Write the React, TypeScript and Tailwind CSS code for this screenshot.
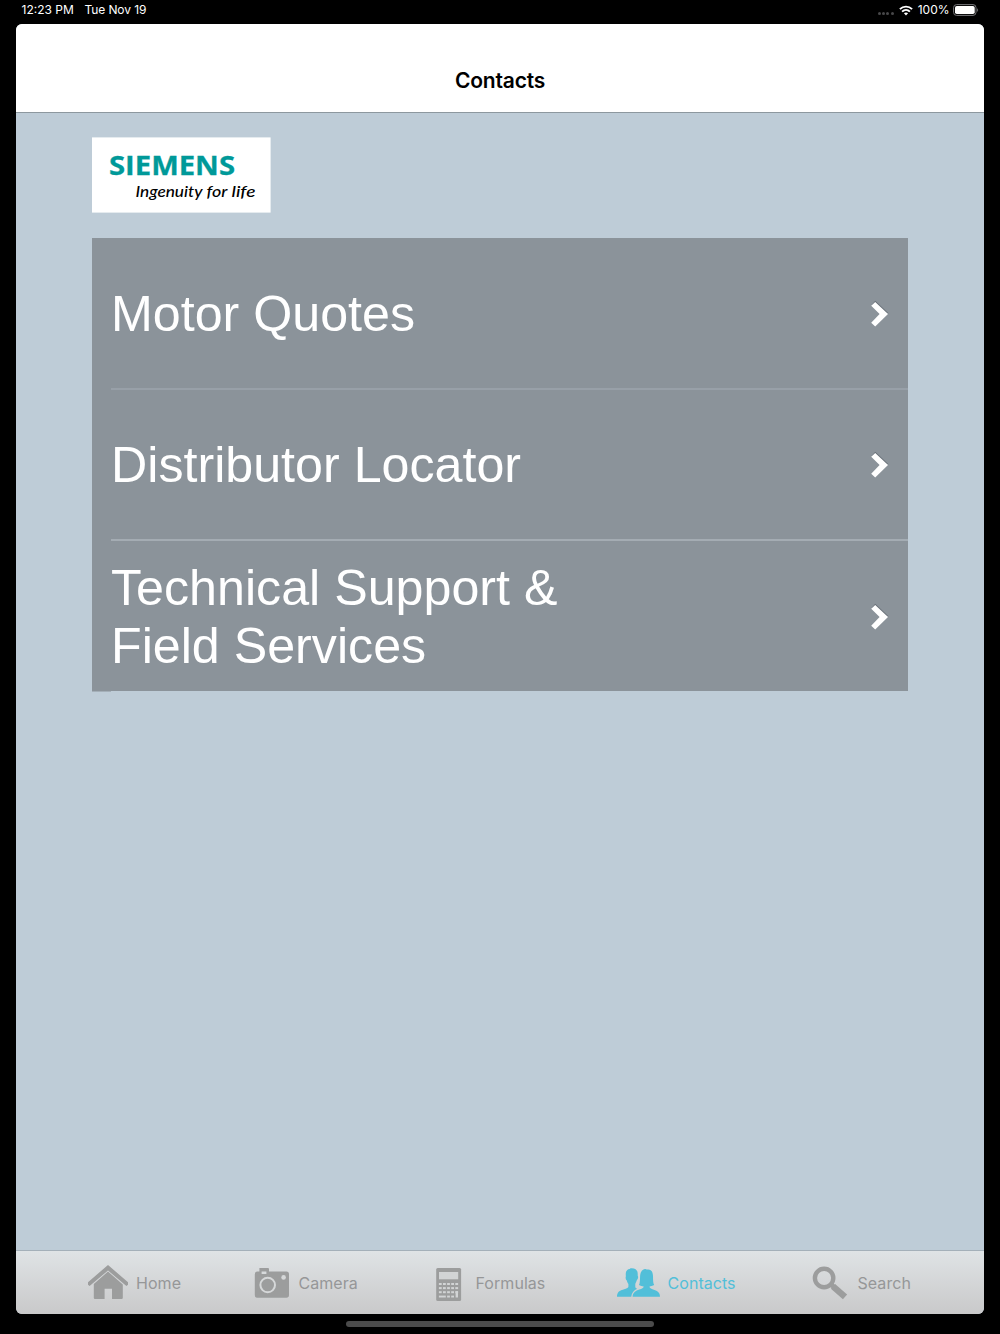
import type { ReactNode } from "react";

const contactRows = [
  { id: "quotes", lines: ["Motor Quotes"], rowClass: "h-[152px]", dividerClass: "border-b-2 border-[#98a0a8] pt-[2px]" },
  { id: "distributor", lines: ["Distributor Locator"], rowClass: "h-[151px]", dividerClass: "border-b-2 border-[#a4acb3] pt-px" },
  { id: "support", lines: ["Technical Support &", "Field Services"], rowClass: "h-[150px]", dividerClass: "pt-[2px]" },
];

function WifiIcon() {
  return (
    <svg width="14" height="11" viewBox="0 0 14 11" fill="none" stroke="#fff" strokeWidth="1.9">
      <path d="M0.9 4.2C4.3 0.8 9.7 0.8 13.1 4.2" />
      <path d="M3.1 6.6C5.3 4.5 8.7 4.5 10.9 6.6" />
      <path d="M4.9 8.3C6 7.3 8 7.3 9.1 8.3L7 10.5Z" fill="#fff" stroke="none" />
    </svg>
  );
}

function BatteryIcon() {
  return (
    <svg width="26" height="12" viewBox="0 0 26 12">
      <rect x="0.6" y="0.6" width="22.4" height="10.8" rx="3" fill="none" stroke="#77777a" strokeWidth="1" />
      <rect x="2" y="2" width="19.7" height="8" rx="1.8" fill="#fff" />
      <path d="M24.2 4.2C25.4 4.6 25.4 7.4 24.2 7.8Z" fill="#77777a" />
    </svg>
  );
}

function HomeIcon() {
  return (
    <svg className="-mt-px" width="40" height="34" viewBox="0 0 40 34" fill="#9c9d9d">
      <path d="M20 0L40 17.2V19.8L38.4 20.9L20 5.4L1.6 20.9L0 19.8V17.2Z" />
      <path d="M20 6.6L34.8 19.4V32.8Q34.8 34 33.6 34H24V23.8H16.6V34H7Q5.8 34 5.8 33V18.9Z" />
    </svg>
  );
}

function CameraIcon() {
  return (
    <svg className="mt-px" width="35" height="30" viewBox="0 0 35 30">
      <path
        fill="#9c9d9d"
        fillRule="evenodd"
        d="M5.4 0H14Q15 0 15 1V3.5H32.4Q35 3.5 35 6.2V27Q35 29.7 32.4 29.7H3Q.8 29.7.8 27V6.5Q.8 3.5 3.4 3.5H5.4ZM7.6 3.5V6H12.4V3.5Z"
      />
      <circle cx="13.7" cy="17" r="7.3" fill="none" stroke="#d6d8d9" strokeWidth="2" />
      <circle cx="29.6" cy="9.4" r="2.3" fill="#d6d8d9" />
    </svg>
  );
}

function CalculatorIcon() {
  return (
    <svg className="mt-[3px]" width="26" height="33" viewBox="0 0 26 33">
      <rect x="0.2" width="24.9" height="33" rx="1.5" fill="#9c9d9d" />
      <g fill="#d2d4d5">
        <rect x="3" y="4" width="19.2" height="7.3" />
        {[15, 19.1, 23.2].map((y) =>
          [2.9, 7, 11.1, 15.2, 19.3].map((x) => (
            <rect key={`${x}-${y}`} x={x} y={y} width="2.8" height="2" />
          )),
        )}
        <rect x="2.9" y="27.6" width="6.9" height="1.9" />
        <rect x="11.1" y="27.6" width="2.8" height="1.9" />
        <rect x="15.2" y="27.6" width="2.8" height="1.9" />
        <rect x="19.6" y="23.2" width="2.4" height="6.3" />
      </g>
    </svg>
  );
}

function ContactsIcon() {
  return (
    <svg width="43" height="29" viewBox="0 0 43 29" fill="#52bfd9">
      <path d="M14.7 0.3C19.4 0.3 21 3 20.7 7.2C20.6 8.1 21.4 8.3 21 10C20.6 11.5 20 11.6 19.7 12.6C19.3 14.3 18.5 15 18.3 16.2V19C18.6 20.2 19.5 20.4 20.2 20.8C17 22.4 14.7 24.8 14.2 28.8H0C0 24.8 1.8 23.3 4.8 22.1C8 20.8 11.1 20.3 11.4 18.7V16.1C10.8 14.8 10.1 14.2 9.8 12.5C8.9 12.1 8.2 9.3 8.9 8.2C8.3 4.3 9.4 1.4 12.6 0.9C13.2 0.4 13.9 0.3 14.7 0.3Z" />
      <path d="M28.4 1.1L29.7 1.6C34.4 .7 35.9 4 36 8.2C36.1 12.2 36 15 37.2 17.1C35.7 18.1 33.6 18.3 32.5 18.5C32.5 20.4 34.6 21 37.5 22.1C41.1 23.5 43 25 43 28.8H15.6C15.7 24.6 18.7 22.8 22.3 21.5C24.9 20.6 26.6 20.2 26.7 18.5C25.2 18.3 23.3 18 22 17.1C23.1 14.6 22.9 11.9 23.1 8C23.4 3.7 25 1.6 28.4 1.1Z" />
    </svg>
  );
}

function SearchIcon() {
  return (
    <svg width="36" height="34" viewBox="0 0 36 34" fill="none" stroke="#9c9d9d">
      <circle cx="12.1" cy="12" r="9.2" strokeWidth="4.4" />
      <path d="M18.5 18L22.5 21.5" strokeWidth="4.8" />
      <path d="M21 20.3L33 30.8" strokeWidth="6.4" />
    </svg>
  );
}

function ChevronIcon() {
  return (
    <svg className="shrink-0" width="20" height="28" viewBox="0 0 20 28">
      <path d="M5.2 0.8L18.8 13.6L14 12L1.6 5Z" fill="#687078" />
      <path d="M5.2 2L18 14L5.2 26.6L1.2 22.8L9.6 14L1.2 5.7Z" fill="#fff" />
    </svg>
  );
}

function SiemensLogo() {
  return (
    <svg className="block" width="179" height="76" viewBox="0 0 179 76" role="img" aria-label="Siemens">
      <rect y="0.4" width="178.6" height="75.2" fill="#fff" />
      <text
        x="17"
        y="38.3"
        textLength="126"
        lengthAdjust="spacingAndGlyphs"
        fill="#009999"
        stroke="#009999"
        strokeWidth="0.3"
        className="font-['Open_Sans',sans-serif] text-[26px] font-bold"
      >
        SIEMENS
      </text>
      <g fill="#000" className="font-['Lato',sans-serif] text-[16px] font-medium italic">
        <text x="43.5" y="60" textLength="67" lengthAdjust="spacingAndGlyphs">
          Ingenuity
        </text>
        <text x="114.5" y="60" textLength="21" lengthAdjust="spacingAndGlyphs">
          for
        </text>
        <text x="139.5" y="60" textLength="24" lengthAdjust="spacingAndGlyphs">
          life
        </text>
      </g>
    </svg>
  );
}

function Tab({ icon, label, iconBox, active = false }: { icon: ReactNode; label: string; iconBox: string; active?: boolean }) {
  return (
    <button type="button" className="flex h-full items-center">
      <span className={`${iconBox} shrink-0`}>{icon}</span>
      <span className={active ? "text-[#52bfd9]" : "text-[#969798]"}>{label}</span>
    </button>
  );
}

export default function App() {
  return (
    <div className="flex h-[1334px] w-[1000px] flex-col overflow-hidden bg-black font-['Inter',sans-serif]">
      <div className="flex h-6 shrink-0 items-start justify-between pl-[21.5px] pr-[21.5px] text-[12px] leading-5 text-white">
        <div className="flex gap-[10px]">
          <span className="w-[53px] whitespace-nowrap">12:23 PM</span>
          <span className="whitespace-nowrap tracking-[-0.1px]">Tue Nov 19</span>
        </div>
        <div className="flex h-5 items-center">
          <span className="mr-[5px] mt-[7px] flex gap-[1.4px]">
            {[0, 1, 2, 3].map((dot) => (
              <i key={dot} className="size-[3px] rounded-full bg-[#48484a]" />
            ))}
          </span>
          <WifiIcon />
          <span className="ml-[5px] mr-[3px]">100%</span>
          <BatteryIcon />
        </div>
      </div>

      <div className="mx-4 flex h-[1290px] shrink-0 flex-col overflow-hidden rounded-[6px] bg-[#beccd7]">
        <header className="flex h-[89px] shrink-0 items-end justify-center border-b border-[#8d989f] bg-white pb-[17px]">
          <h1 className="text-[21px] font-semibold leading-[28px] tracking-[-0.2px] text-black">Contacts</h1>
        </header>

        <main className="flex-1 px-[76px] pt-6">
          <SiemensLogo />
          <ul className="mt-[25px] h-[453px] bg-[#8b939a]">
            {contactRows.map((row) => (
              <li key={row.id} className={`flex pl-[19px] ${row.rowClass}`}>
                <div className={`flex flex-1 items-center justify-between pr-[18.5px] ${row.dividerClass}`}>
                  <span className="font-['Liberation_Sans',sans-serif] text-[50.2px] leading-[58px] text-white">
                    {row.lines.map((line) => (
                      <span key={line} className="block whitespace-nowrap">
                        {line}
                      </span>
                    ))}
                  </span>
                  <ChevronIcon />
                </div>
              </li>
            ))}
          </ul>
          <div className="h-px w-[19px] bg-[#a4afb8]" />
        </main>

        <nav className="grid h-16 shrink-0 grid-cols-[166px_182px_181px_195px_1fr] border-t border-[#a4b0b9] bg-linear-to-b from-[#dfe3e5] to-[#c9c9ca] pl-[72px] text-[16px] tracking-[0.05px]">
          <Tab icon={<HomeIcon />} label="Home" iconBox="w-12" />
          <Tab icon={<CameraIcon />} label="Camera" iconBox="w-[44.5px]" />
          <Tab icon={<CalculatorIcon />} label="Formulas" iconBox="w-[39.5px]" />
          <Tab icon={<ContactsIcon />} label="Contacts" iconBox="w-[50.5px]" active />
          <Tab icon={<SearchIcon />} label="Search" iconBox="w-[45.5px]" />
        </nav>
      </div>

      <div className="mx-auto mt-[7px] h-[6px] w-[308px] rounded-full bg-[#4b4b4b]" />
    </div>
  );
}
